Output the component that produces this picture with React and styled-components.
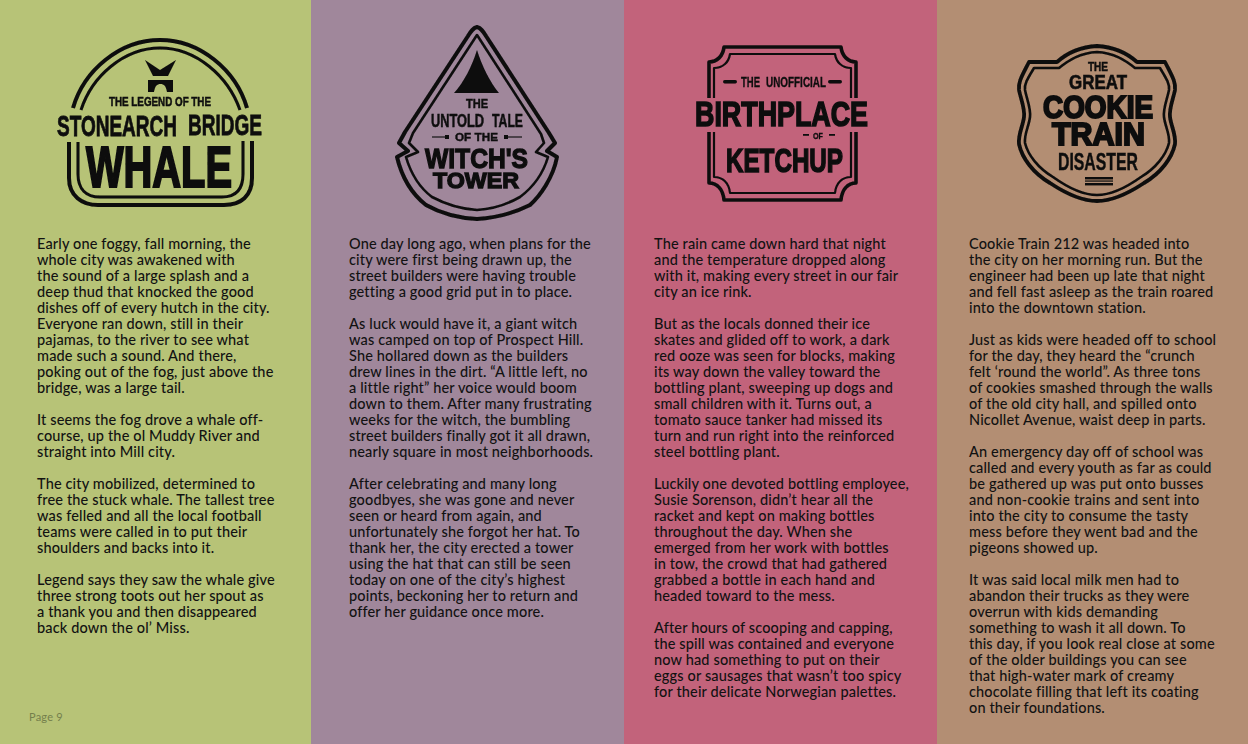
import React from "react";
import styled, { createGlobalStyle } from "styled-components";

const GlobalStyle = createGlobalStyle`
  html, body {
    margin: 0;
    padding: 0;
    background: #b7c377;
  }
`;

const Page = styled.div`
  display: grid;
  grid-template-columns: 311px 313px 313px 311px;
  width: 1248px;
  height: 744px;
  overflow: hidden;
`;

const Column = styled.section`
  display: flex;
  flex-direction: column;
  height: 744px;
  background: ${(p) => p.$bg};
`;

const Badge = styled.svg`
  display: block;
  flex: none;
  width: 100%;
  height: 236px;
  font-family: "Liberation Sans", Arial, sans-serif;
  font-weight: 700;
`;

const Story = styled.div`
  padding-left: ${(p) => p.$left}px;
  font-family: Lato, "Open Sans", sans-serif;
  font-size: 14.5px;
  font-weight: 500;
  line-height: 16px;
  letter-spacing: 0.15px;
  color: #121212;
`;

const Paragraph = styled.p`
  margin: 0 0 16px;
`;

const Line = styled.span`
  display: block;
  white-space: nowrap;
`;

const PageNumber = styled.div`
  margin-top: auto;
  padding: 0 0 20px 29px;
  font-family: Lato, sans-serif;
  font-size: 11px;
  font-weight: 400;
  letter-spacing: 0.2px;
  line-height: 14px;
  color: #747f4c;
`;

const INK = "#0c0c0c";

// slight wobble so the badges look hand cut like the printed ones
const Rough = ({ id }) => (
  <defs>
    <filter id={id} x="-5%" y="-5%" width="110%" height="110%">
      <feTurbulence type="fractalNoise" baseFrequency="0.07" numOctaves="1" seed="4" />
      <feDisplacementMap in="SourceGraphic" scale="1" />
    </filter>
  </defs>
);

const Label = ({ x1, x2, y, size, thick = 0.3, children }) => (
  <text
    x={x1}
    y={y}
    fontSize={size}
    textLength={x2 - x1}
    lengthAdjust="spacingAndGlyphs"
    fill={INK}
    stroke={INK}
    strokeWidth={thick}
    strokeLinejoin="miter"
  >
    {children}
  </text>
);

const Outline = ({ d, w }) => (
  <path d={d} fill="none" stroke={INK} strokeWidth={w} strokeLinejoin="round" strokeLinecap="butt" />
);

const WhaleBadge = () => (
  <Badge viewBox="0 0 311 236">
    <Rough id="rough-whale" />
    <g filter="url(#rough-whale)">
      <Outline w={4} d="M73 108 C84 70 120 40 160 40 C200 40 236 70 247 108" />
      <Outline w={3} d="M81 110 C92 76 124 48 160 48 C196 48 228 76 240 110" />
      <Outline w={4} d="M69 142 V178 C69 196 82 205 98 205 H224 C241 205 252 196 252 178 V141" />
      <Outline w={3} d="M78 142 V174 C78 189 86 197 100 197 H222 C236 197 243 189 243 174 V141" />
      <path d="M145 60 L160 70 L176 60 L168 76 H153 Z" fill={INK} />
      <path d="M148 80 H173 V92 H167 C166 86 164 84 160.5 84 C157 84 155 86 154 92 H148 Z" fill={INK} />
      <Label x1={109} x2={211} y={106} size={12.5} thick={0.5}>THE LEGEND OF THE</Label>
      <Label x1={57} x2={177} y={136} size={30} thick={0.8}>STONEARCH</Label>
      <Label x1={188} x2={262} y={135} size={30} thick={0.8}>BRIDGE</Label>
      <Label x1={86} x2={232} y={187} size={58} thick={2.2}>WHALE</Label>
    </g>
  </Badge>
);

const WitchBadge = () => (
  <Badge viewBox="311 0 313 236">
    <Rough id="rough-witch" />
    <g filter="url(#rough-witch)">
      <Outline
        w={4}
        d="M477 27 C481 28 483 31 486 36 L549 133 L555 143 L547 151 L557 157 C553 178 540 196 530 205 C512 214 495 218 477 219 C458 218 442 214 426 205 C412 194 402 178 397 157 L408 151 L399 143 L405 132 L468 36 C471 31 473 28 477 27 Z"
      />
      <Outline
        w={2.6}
        d="M477 35 L541 134 L544 143 L536 152 L548 157 C543 174 532 188 520 197 C506 205 492 209 477 210 C461 209 447 205 432 197 C420 188 411 174 406 157 L418 152 L409 143 L413 133 Z"
      />
      <path d="M477 50 C482 66 490 82 499 93 H454 C464 82 472 66 477 50 Z" fill={INK} />
      <Label x1={466} x2={488} y={108} size={12.5} thick={0.5}>THE</Label>
      <Label x1={431} x2={484} y={127} size={19} thick={0.5}>UNTOLD</Label>
      <Label x1={492} x2={523} y={127} size={19} thick={0.5}>TALE</Label>
      <rect x={432} y={136.4} width={13} height={1.2} fill={INK} />
      <rect x={445} y={135} width={4} height={4} fill={INK} />
      <Label x1={455} x2={498} y={141} size={11.5} thick={0.4}>OF THE</Label>
      <rect x={504} y={135} width={4} height={4} fill={INK} />
      <rect x={508} y={136.4} width={14} height={1.2} fill={INK} />
      <Label x1={425} x2={528} y={168} size={28} thick={1.3}>WITCH'S</Label>
      <Label x1={433} x2={519} y={188} size={22} thick={1.3}>TOWER</Label>
    </g>
  </Badge>
);

const KetchupBadge = () => (
  <Badge viewBox="624 0 313 236">
    <Rough id="rough-ketchup" />
    <g filter="url(#rough-ketchup)">
      <Outline w={3.6} d="M709 98 V62 C717 62 723 56 724 47 H841 C842 56 848 62 856 62 V98" />
      <Outline w={3.6} d="M709 132 V183 C717 183 723 189 724 200 H841 C842 189 848 183 856 183 V132" />
      <Outline w={2.2} d="M714 98 V68 C723 68 729 62 730 54 H835 C836 62 842 68 851 68 V98" />
      <Outline w={2.2} d="M714 132 V177 C723 177 729 183 730 193 H835 C836 183 842 177 851 177 V132" />
      <rect x={723} y={80} width={14} height={3.4} rx={1.7} fill={INK} />
      <Label x1={741} x2={760} y={87} size={15} thick={0.3}>THE</Label>
      <Label x1={766} x2={826} y={87} size={15} thick={0.3}>UNOFFICIAL</Label>
      <rect x={828} y={80} width={14} height={3.4} rx={1.7} fill={INK} />
      <Label x1={695} x2={868} y={125.5} size={35} thick={1.6}>BIRTHPLACE</Label>
      <rect x={803} y={134} width={6} height={1.8} fill={INK} />
      <Label x1={813} x2={823} y={138.5} size={9} thick={0.3}>OF</Label>
      <rect x={829} y={134} width={6} height={1.8} fill={INK} />
      <Label x1={726} x2={843} y={171.5} size={33} thick={1.5}>KETCHUP</Label>
    </g>
  </Badge>
);

const CookieBadge = () => (
  <Badge viewBox="937 0 311 236">
    <Rough id="rough-cookie" />
    <g filter="url(#rough-cookie)">
      <Outline
        w={3.8}
        d="M1097 46 C1078 47 1066 54 1057 62 H1029 C1022 76 1018 82 1019 90 C1021 100 1025 108 1024 117 C1023 126 1018 134 1019 144 C1022 158 1033 173 1050 183 C1065 193 1082 201 1097 201 C1112 201 1129 193 1144 183 C1161 173 1172 158 1175 144 C1176 134 1171 126 1170 117 C1169 108 1173 100 1175 90 C1176 82 1172 76 1165 62 H1137 C1128 54 1116 47 1097 46 Z"
      />
      <Outline
        w={2.6}
        d="M1097 52 C1080 53 1069 60 1059 68 H1034 C1028 78 1024 84 1025 90 C1027 100 1031 108 1030 117 C1029 126 1024 134 1025 143 C1028 155 1038 168 1053 177 C1067 187 1083 195 1097 195 C1111 195 1127 187 1141 177 C1156 168 1166 155 1169 143 C1170 134 1165 126 1164 117 C1163 108 1167 100 1169 90 C1170 84 1166 78 1160 68 H1135 C1125 60 1114 53 1097 52 Z"
      />
      <Label x1={1088} x2={1108} y={71} size={12.5} thick={0.5}>THE</Label>
      <Label x1={1069} x2={1127} y={89} size={19.5} thick={0.6}>GREAT</Label>
      <Label x1={1043} x2={1153} y={117.5} size={31} thick={2}>COOKIE</Label>
      <Label x1={1052} x2={1145} y={144.5} size={31} thick={2}>TRAIN</Label>
      <Label x1={1058} x2={1138} y={170} size={24} thick={0.4}>DISASTER</Label>
      <rect x={1085} y={177} width={28} height={2.4} fill={INK} />
      <rect x={1085} y={180.5} width={28} height={1.2} fill={INK} />
      <rect x={1085} y={183} width={28} height={2.4} fill={INK} />
    </g>
  </Badge>
);

const columns = [
  {
    bg: "#b7c377",
    left: 37,
    badge: <WhaleBadge />,
    footer: "Page 9",
    story: [
      [
        "Early one foggy, fall morning, the",
        "whole city was awakened with",
        "the sound of a large splash and a",
        "deep thud that knocked the good",
        "dishes off of every hutch in the city.",
        "Everyone ran down, still in their",
        "pajamas, to the river to see what",
        "made such a sound. And there,",
        "poking out of the fog, just above the",
        "bridge, was a large tail.",
      ],
      [
        "It seems the fog drove a whale off-",
        "course, up the ol Muddy River and",
        "straight into Mill city.",
      ],
      [
        "The city mobilized, determined to",
        "free the stuck whale. The tallest tree",
        "was felled and all the local football",
        "teams were called in to put their",
        "shoulders and backs into it.",
      ],
      [
        "Legend says they saw the whale give",
        "three strong toots out her spout as",
        "a thank you and then disappeared",
        "back down the ol’ Miss.",
      ],
    ],
  },
  {
    bg: "#a0879b",
    left: 38,
    badge: <WitchBadge />,
    story: [
      [
        "One day long ago, when plans for the",
        "city were first being drawn up, the",
        "street builders were having trouble",
        "getting a good grid put in to place.",
      ],
      [
        "As luck would have it, a giant witch",
        "was camped on top of Prospect Hill.",
        "She hollared down as the builders",
        "drew lines in the dirt. “A little left, no",
        "a little right” her voice would boom",
        "down to them. After many frustrating",
        "weeks for the witch, the bumbling",
        "street builders finally got it all drawn,",
        "nearly square in most neighborhoods.",
      ],
      [
        "After celebrating and many long",
        "goodbyes, she was gone and never",
        "seen or heard from again, and",
        "unfortunately she forgot her hat. To",
        "thank her, the city erected a tower",
        "using the hat that can still be seen",
        "today on one of the city’s highest",
        "points, beckoning her to return and",
        "offer her guidance once more.",
      ],
    ],
  },
  {
    bg: "#c2637b",
    left: 30,
    badge: <KetchupBadge />,
    story: [
      [
        "The rain came down hard that night",
        "and the temperature dropped along",
        "with it, making every street in our fair",
        "city an ice rink.",
      ],
      [
        "But as the locals donned their ice",
        "skates and glided off to work, a dark",
        "red ooze was seen for blocks, making",
        "its way down the valley toward the",
        "bottling plant, sweeping up dogs and",
        "small children with it. Turns out, a",
        "tomato sauce tanker had missed its",
        "turn and run right into the reinforced",
        "steel bottling plant.",
      ],
      [
        "Luckily one devoted bottling employee,",
        "Susie Sorenson, didn’t hear all the",
        "racket and kept on making bottles",
        "throughout the day. When she",
        "emerged from her work with bottles",
        "in tow, the crowd that had gathered",
        "grabbed a bottle in each hand and",
        "headed toward to the mess.",
      ],
      [
        "After hours of scooping and capping,",
        "the spill was contained and everyone",
        "now had something to put on their",
        "eggs or sausages that wasn’t too spicy",
        "for their delicate Norwegian palettes.",
      ],
    ],
  },
  {
    bg: "#b38e73",
    left: 32,
    badge: <CookieBadge />,
    story: [
      [
        "Cookie Train 212 was headed into",
        "the city on her morning run. But the",
        "engineer had been up late that night",
        "and fell fast asleep as the train roared",
        "into the downtown station.",
      ],
      [
        "Just as kids were headed off to school",
        "for the day, they heard the “crunch",
        "felt ‘round the world”. As three tons",
        "of cookies smashed through the walls",
        "of the old city hall, and spilled onto",
        "Nicollet Avenue, waist deep in parts.",
      ],
      [
        "An emergency day off of school was",
        "called and every youth as far as could",
        "be gathered up was put onto busses",
        "and non-cookie trains and sent into",
        "into the city to consume the tasty",
        "mess before they went bad and the",
        "pigeons showed up.",
      ],
      [
        "It was said local milk men had to",
        "abandon their trucks as they were",
        "overrun with kids demanding",
        "something to wash it all down. To",
        "this day, if you look real close at some",
        "of the older buildings you can see",
        "that high-water mark of creamy",
        "chocolate filling that left its coating",
        "on their foundations.",
      ],
    ],
  },
];

export default function App() {
  return (
    <>
      <GlobalStyle />
      <Page>
        {columns.map((col) => (
          <Column key={col.bg} $bg={col.bg}>
            {col.badge}
            <Story $left={col.left}>
              {col.story.map((para) => (
                <Paragraph key={para[0]}>
                  {para.map((line) => (
                    <Line key={line}>{line}</Line>
                  ))}
                </Paragraph>
              ))}
            </Story>
            {col.footer && <PageNumber>{col.footer}</PageNumber>}
          </Column>
        ))}
      </Page>
    </>
  );
}
